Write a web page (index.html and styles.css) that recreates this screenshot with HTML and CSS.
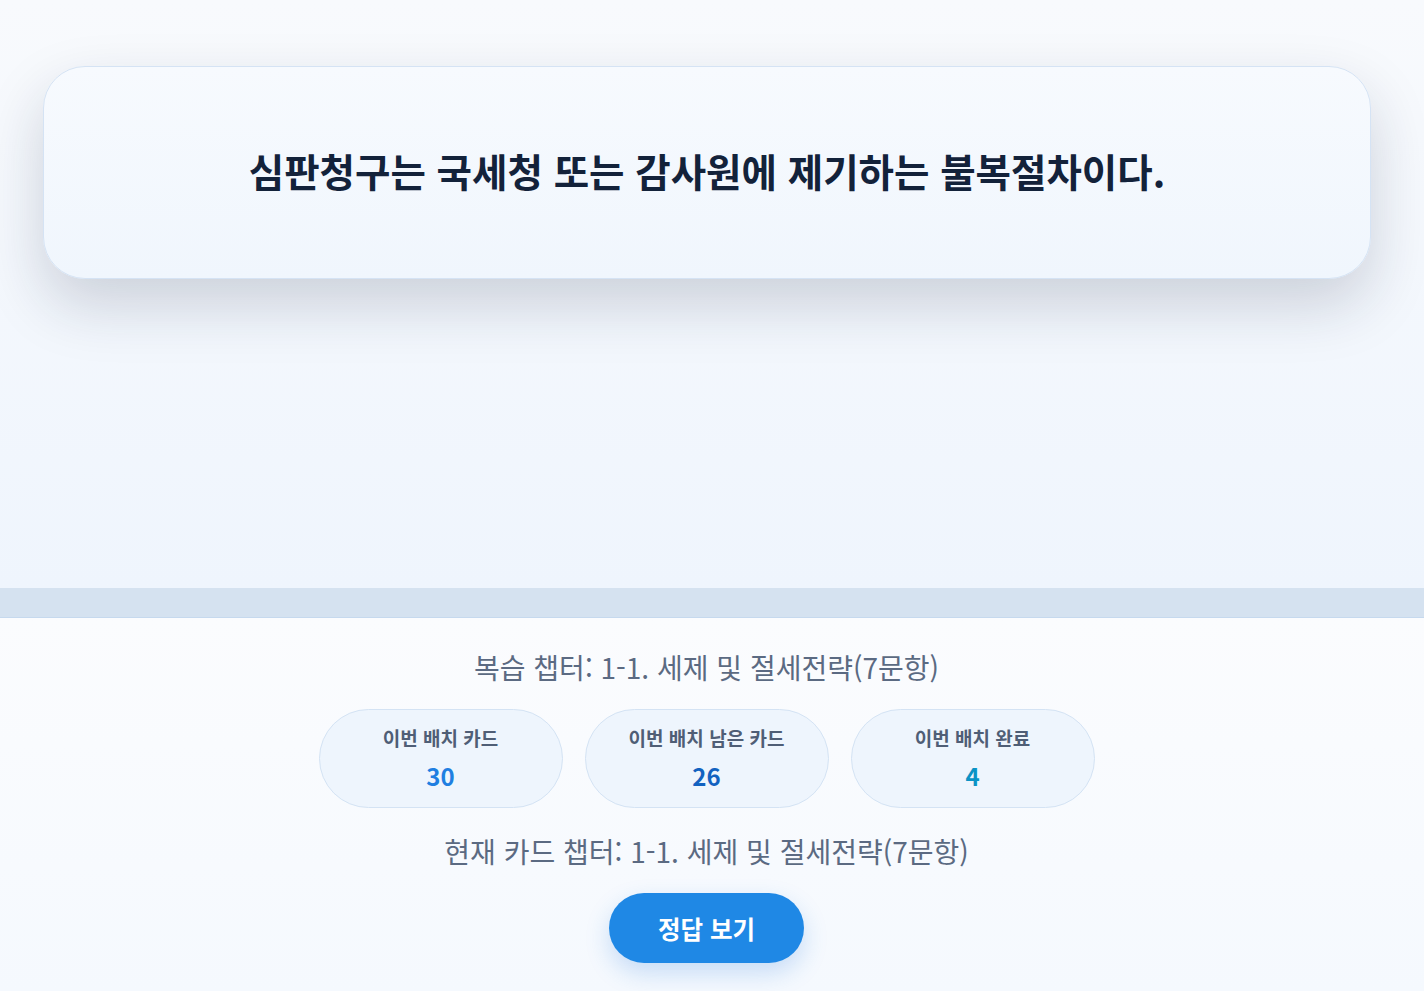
FILE: index.html
```html
<!DOCTYPE html>
<html lang="ko">
<head>
	<meta charset="utf-8">
	<meta name="viewport" content="width=device-width, initial-scale=1">
	<title>복습 카드</title>
	<link rel="stylesheet" href="styles.css">
</head>
<body>

<div class="stage">
	<div class="card">
		<p class="question">심판청구는 국세청 또는 감사원에 제기하는 불복절차이다.</p>
	</div>
</div>

<div class="divider"></div>

<div class="panel">
	<p class="chapter">복습 챕터: 1-1. 세제 및 절세전략(7문항)</p>
	<div class="stats">
		<div class="stat">
			<span class="stat-label">이번 배치 카드</span>
			<span class="stat-value total">30</span>
		</div>
		<div class="stat">
			<span class="stat-label">이번 배치 남은 카드</span>
			<span class="stat-value left">26</span>
		</div>
		<div class="stat">
			<span class="stat-label">이번 배치 완료</span>
			<span class="stat-value done">4</span>
		</div>
	</div>
	<p class="chapter">현재 카드 챕터: 1-1. 세제 및 절세전략(7문항)</p>
	<button class="reveal">정답 보기</button>
</div>

</body>
</html>
```

FILE: styles.css
```css
/* base */
body {
	margin: 0;
	padding: 0;
	font-family: "Noto Sans CJK KR", "Noto Sans", sans-serif;
	background: #fafcfe;
}

/* flashcard area */
.stage {
	height: 588px;
	box-sizing: border-box;
	padding: 66px 53px 0 43px;
	background: linear-gradient(180deg, #f8fafd 0%, #eff5fd 100%);
}
.card {
	height: 213px;
	box-sizing: border-box;
	display: flex;
	align-items: center;
	justify-content: center;
	padding-bottom: 6px;
	border: 1px solid #d5e3f4;
	border-radius: 42px;
	background: linear-gradient(180deg, #f7fafe 0%, #f0f6fd 100%);
	box-shadow: 0 26px 60px rgba(20, 35, 60, 0.18);
}
.question {
	margin: 0;
	font-size: 38.5px;
	font-weight: 700;
	color: #13223a;
}

.divider {
	height: 29px;
	background: #d5e2f0;
	border-bottom: 1px solid #c6d9ee;
}

/* bottom panel */
.panel {
	display: flex;
	flex-direction: column;
	align-items: center;
	padding: 30px 11px 0 0;
	height: 373px;
	box-sizing: border-box;
	background: linear-gradient(180deg, #fbfcfe 0%, #f5f9fe 100%);
}
.chapter {
	margin: 0;
	font-size: 28px;
	line-height: 39px;
	color: #5b6a82;
}
.stats {
	display: flex;
	gap: 22px;
	margin: 22px 0 24px;
}
.stat {
	width: 244px;
	height: 99px;
	box-sizing: border-box;
	display: flex;
	flex-direction: column;
	align-items: center;
	justify-content: center;
	gap: 12px;
	padding-bottom: 3px;
	border: 1px solid #d4e3f4;
	border-radius: 50px;
	background: #eef5fd;
}
.stat-label {
	font-size: 19px;
	line-height: 25px;
	font-weight: 700;
	color: #4f5e76;
}
.stat-value {
	font-size: 24px;
	line-height: 28px;
	font-weight: 700;
}
.total { color: #1f7fe1; }
.left { color: #1262c0; }
.done { color: #0b93c5; }

.reveal {
	margin-top: 22px;
	width: 195px;
	height: 70px;
	border: none;
	border-radius: 35px;
	background: #1f88e5;
	color: #fff;
	font-family: inherit;
	font-size: 24.5px;
	font-weight: 700;
	box-shadow: 0 10px 24px rgba(30, 120, 220, 0.22);
	cursor: pointer;
}
```
